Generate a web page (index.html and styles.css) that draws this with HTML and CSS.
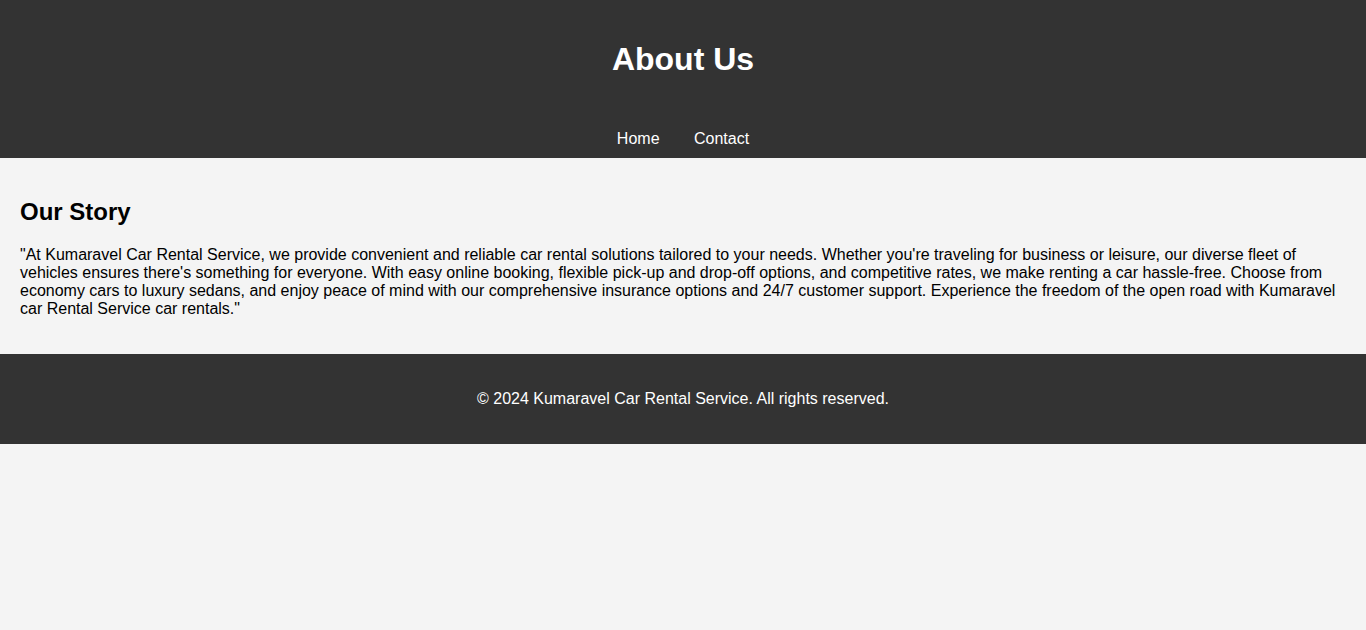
FILE: index.html
```html
<!DOCTYPE html>
<html lang="en">
<head>
<meta charset="UTF-8">
<title>About Us</title>
<link rel="stylesheet" href="styles.css">
</head>
<body>
<header class="site-header">
  <h1 class="site-title">About Us</h1>
</header>
<nav class="site-nav">
  <ul class="nav-list">
    <li class="nav-item"><a class="nav-link" href="#">Home</a></li>
    <li class="nav-item"><a class="nav-link" href="#">Contact</a></li>
  </ul>
</nav>
<section class="story">
  <h2 class="story-title">Our Story</h2>
  <p class="story-text">"At Kumaravel Car Rental Service, we provide convenient and reliable car rental solutions tailored to your needs. Whether you're traveling for business or leisure, our diverse fleet of vehicles ensures there's something for everyone. With easy online booking, flexible pick-up and drop-off options, and competitive rates, we make renting a car hassle-free. Choose from economy cars to luxury sedans, and enjoy peace of mind with our comprehensive insurance options and 24/7 customer support. Experience the freedom of the open road with Kumaravel car Rental Service car rentals."</p>
</section>
<footer class="site-footer">
  <p class="footer-text">&copy; 2024 Kumaravel Car Rental Service. All rights reserved.</p>
</footer>
</body>
</html>
```

FILE: styles.css
```css
body {
  margin: 0;
  padding: 0;
  font-family: "Liberation Sans", Arial, sans-serif;
  background: #f4f4f4;
  color: #000;
}

.site-header {
  background: #333;
  color: #fff;
  padding: 20px 0;
  text-align: center;
}

.site-title {
  font-size: 32px;
  margin: 21.44px 0;
}

.site-nav {
  background: #333;
  padding: 10px 0;
  text-align: center;
}

.nav-list {
  list-style: none;
  margin: 0;
  padding: 0;
}

.nav-item {
  display: inline;
  margin: 0 15px;
}

.nav-link {
  color: #fff;
  text-decoration: none;
  font-size: 16px;
}

.story {
  padding: 20px;
}

.story-title {
  font-size: 24px;
  margin: 19.92px 0;
}

.story-text {
  font-size: 16px;
  margin: 16px 0;
}

.site-footer {
  background: #333;
  color: #fff;
  text-align: center;
  padding: 20px 0;
}

.footer-text {
  margin: 16px 0;
}
```
